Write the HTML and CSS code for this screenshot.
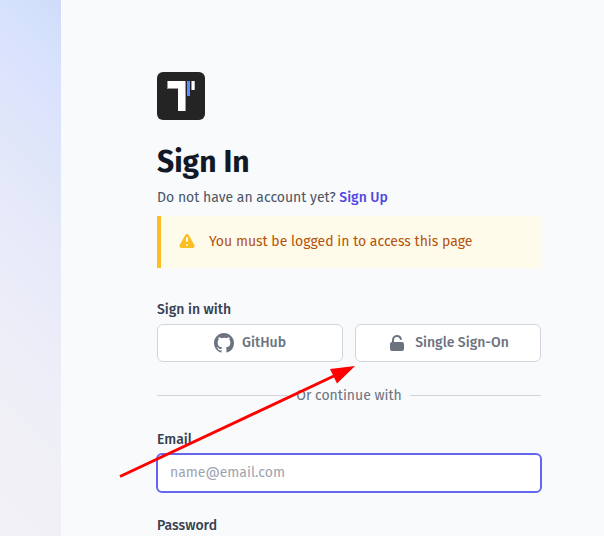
FILE: index.html
```html
<!DOCTYPE html>
<html lang="en">
<head>
<meta charset="utf-8">
<title>Sign In</title>
<link rel="stylesheet" href="styles.css">
</head>
<body>
<div class="page">
  <aside class="backdrop"></aside>
  <main class="content">
    <svg class="logo" viewBox="0 0 48 48">
      <rect width="48" height="48" rx="6" fill="#242424"/>
      <path d="M10 9h3v8h-3zM11 15h10v2H11zM27 9h2v30h-2zM34 9h2v9h-2z" fill="#999"/>
      <path d="M11 9h17v30h-7V16H11zM35 9h2.700v9h-2.700z" fill="#fff"/>
      <path d="M30 9h3v15h-3z" fill="#5b8cff"/>
    </svg>
    <h1>Sign In</h1>
    <p class="subtitle">Do not have an account yet? <a>Sign Up</a></p>
    <div class="alert">
      <svg class="icon" viewBox="0 0 20 20"><path fill-rule="evenodd" d="M8.257 3.099c.765-1.36 2.722-1.36 3.486 0l5.58 9.92c.75 1.334-.213 2.98-1.742 2.98H4.42c-1.53 0-2.493-1.646-1.743-2.98l5.58-9.92zM11 13a1 1 0 11-2 0 1 1 0 012 0zm-1-8a1 1 0 00-1 1v3a1 1 0 002 0V6a1 1 0 00-1-1z"/></svg>
      <span>You must be logged in to access this page</span>
    </div>
    <p class="label providers-label">Sign in with</p>
    <div class="providers">
      <button><svg class="icon" viewBox="0 0 20 20"><path fill-rule="evenodd" d="M10 0C4.477 0 0 4.484 0 10.017c0 4.425 2.865 8.18 6.839 9.504.5.092.682-.217.682-.483 0-.237-.008-.868-.013-1.703-2.782.605-3.369-1.343-3.369-1.343-.454-1.158-1.11-1.466-1.11-1.466-.908-.62.069-.608.069-.608 1.003.07 1.531 1.032 1.531 1.032.892 1.53 2.341 1.088 2.91.832.092-.647.35-1.088.636-1.338-2.22-.253-4.555-1.113-4.555-4.951 0-1.093.39-1.988 1.029-2.688-.103-.253-.446-1.272.098-2.65 0 0 .84-.27 2.75 1.026A9.564 9.564 0 0110 4.844c.85.004 1.705.115 2.504.337 1.909-1.296 2.747-1.027 2.747-1.027.546 1.379.203 2.398.1 2.651.64.7 1.028 1.595 1.028 2.688 0 3.848-2.339 4.695-4.566 4.942.359.31.678.921.678 1.856 0 1.338-.012 2.419-.012 2.747 0 .268.18.58.688.482A10.019 10.019 0 0020 10.017C20 4.484 15.522 0 10 0z"/></svg><span>GitHub</span></button>
      <button><svg class="icon" viewBox="0 0 20 20"><path d="M10 2a5 5 0 00-5 5v2a2 2 0 00-2 2v5a2 2 0 002 2h10a2 2 0 002-2v-5a2 2 0 00-2-2H7V7a3 3 0 015.905-.75 1 1 0 001.937-.5A5.002 5.002 0 0010 2z"/></svg><span>Single Sign-On</span></button>
    </div>
    <div class="divider"><span>Or continue with</span></div>
    <label class="label" for="email">Email</label>
    <input id="email" type="email" placeholder="name@email.com">
    <label class="label" for="password">Password</label>
  </main>
</div>
<svg class="pointer" viewBox="0 0 604 536">
  <path d="M120 476.500L336 375" stroke="#f00" stroke-width="3"/>
  <path d="M355 366L330 369L337 383.500z" fill="#f00"/>
</svg>
</body>
</html>
```
FILE: styles.css
```css
* { box-sizing: border-box; }
body {
  margin: 0;
  font: 14px/20px "Fira Sans", "Noto Sans", sans-serif;
  color: #4b5563;
  background: #f9fafb;
}
.page { display: flex; height: 536px; overflow: hidden; background: #f9fafc; }
.backdrop {
  width: 61px;
  flex: none;
  background: linear-gradient(225deg, #cedcfb 0%, #d4e1fc 8%, #dbe2fd 17%, #e1e7f9 32%, #e8eaf9 47%, #edeef8 65%, #f0f0f5 83%, #f2f1f5 100%);
}
.content { width: 384px; margin-left: 96px; padding-top: 72px; }
.logo { display: block; width: 48px; height: 48px; }
h1 { margin: 24px 0 0; font-size: 30px; line-height: 36px; font-weight: 700; color: #111827; }
p { margin: 0; }
.subtitle { margin-top: 8px; white-space: nowrap; }
.subtitle a { color: #4f46e5; font-weight: 500; }
.alert {
  display: flex;
  gap: 12px;
  margin-top: 8px;
  height: 52px;
  padding: 16px;
  border-left: 4px solid #fbbf24;
  background: #fffbeb;
  color: #b45309;
}
.icon { width: 20px; height: 20px; flex: none; fill: currentColor; }
.alert .icon { color: #fbbf24; }
.label { display: block; height: 20px; font-weight: 500; color: #374151; }
.providers-label { margin-top: 32px; }
.providers { display: grid; grid-template-columns: 1fr 1fr; gap: 12px; margin-top: 4px; }
button {
  display: flex;
  align-items: center;
  justify-content: center;
  gap: 8px;
  height: 38px;
  padding: 0;
  border: 1px solid #d1d5db;
  border-radius: 6px;
  background: #fff;
  color: #6b7280;
  font: inherit;
  font-weight: 500;
}
button span { margin-top: -1px; }
.divider { display: flex; align-items: center; gap: 8px; height: 20px; margin-top: 23px; color: #6b7280; }
.divider span { padding-top: 1px; }
.divider::before, .divider::after { content: ""; flex: 1; height: 1px; background: #d1d5db; }
.divider + .label { margin-top: 25px; }
input {
  display: block;
  width: 386px;
  height: 40px;
  margin: 3px 0 23px -1px;
  padding: 0 12px 2px;
  border: 2px solid #6366f1;
  border-radius: 6px;
  outline: 0;
  background: #fff;
  font: inherit;
}
input::placeholder { color: #9ca3af; opacity: 1; }
.pointer { position: absolute; left: 0; top: 0; width: 604px; height: 536px; pointer-events: none; }
```
